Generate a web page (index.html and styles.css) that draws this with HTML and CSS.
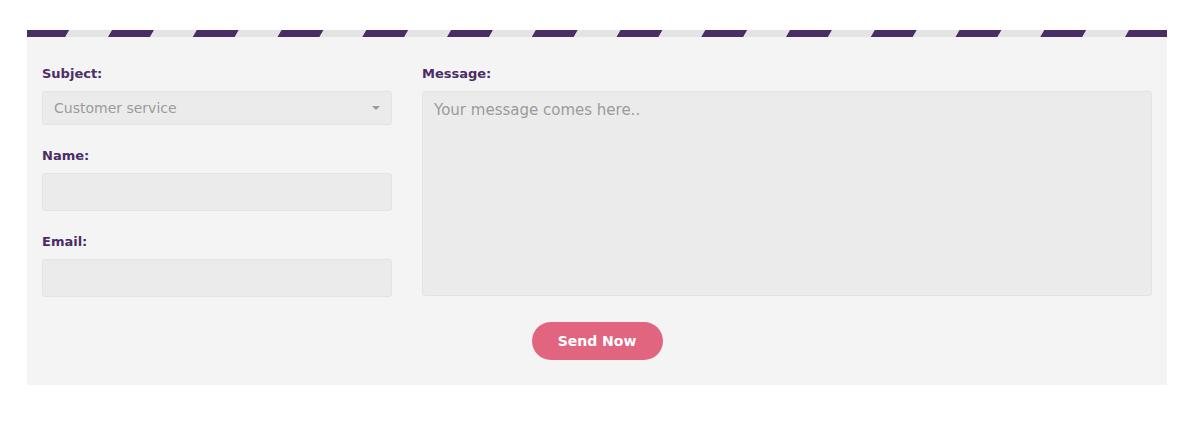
FILE: index.html
```html
<!DOCTYPE html>
<html>
<head>
<meta charset="utf-8">
<link rel="stylesheet" href="styles.css">
</head>
<body>
<div class="panel">
  <div class="stripes"></div>
  <form class="form">
    <div class="grid">
      <div class="col">
        <div class="group">
          <label class="label">Subject:</label>
          <div class="select">
            <span class="select-text">Customer service</span>
            <span class="caret"></span>
          </div>
        </div>
        <div class="group">
          <label class="label">Name:</label>
          <input class="input" type="text">
        </div>
        <div class="group last">
          <label class="label">Email:</label>
          <input class="input" type="text">
        </div>
      </div>
      <div class="col">
        <div class="group last">
          <label class="label">Message:</label>
          <textarea class="textarea" placeholder="Your message comes here.."></textarea>
        </div>
      </div>
    </div>
    <div class="actions">
      <button class="btn" type="button">Send Now</button>
    </div>
  </form>
</div>
</body>
</html>
```
FILE: styles.css
```css
* { box-sizing: border-box; }
body {
  margin: 0;
  background: #ffffff;
  font-family: "DejaVu Sans", sans-serif;
}
.panel {
  width: 1140px;
  margin: 30px 0 0 27px;
  background: #f4f4f4;
  padding-bottom: 25px;
}
.stripes {
  height: 7px;
  overflow: hidden;
  position: relative;
  background: #e4e4e4;
}
.stripes::before {
  content: "";
  position: absolute;
  left: -100px;
  right: -20px;
  top: 0;
  bottom: 0;
  transform-origin: bottom left;
  transform: skewX(-30deg);
  background-image: linear-gradient(90deg, #4b2d66 0 42px, #e4e4e4 42px 100%);
  background-size: 84.75px 100%;
  background-repeat: repeat-x;
  background-position: 96.25px 0;
}
.form { padding-top: 27px; }
.grid {
  display: grid;
  grid-template-columns: 380px 760px;
}
.col { padding: 0 15px; }
.group { margin-bottom: 21px; }
.group.last { margin-bottom: 0; }
.label {
  display: block;
  font-size: 13px;
  line-height: 20px;
  font-weight: 600;
  color: #4b2d66;
  margin-bottom: 7px;
}
.select {
  height: 34px;
  background: #ebebeb;
  border: 1px solid #e3e3e3;
  border-radius: 3px;
  display: flex;
  align-items: center;
  justify-content: space-between;
  padding: 0 11px 0 11px;
}
.select-text {
  font-size: 14px;
  color: #9b9b9b;
}
.caret {
  width: 0;
  height: 0;
  border-left: 4px solid transparent;
  border-right: 4px solid transparent;
  border-top: 4px solid #9a9a9a;
}
.input {
  display: block;
  width: 100%;
  height: 38px;
  background: #ebebeb;
  border: 1px solid #e3e3e3;
  border-radius: 3px;
  outline: none;
  margin: 0;
}
.textarea {
  display: block;
  width: 100%;
  height: 205px;
  margin: 0;
  background: #ebebeb;
  border: 1px solid #e3e3e3;
  border-radius: 3px;
  padding: 8px 11px;
  font-family: "DejaVu Sans", sans-serif;
  font-size: 15px;
  line-height: 20px;
  resize: none;
  outline: none;
}
.textarea::placeholder { color: #9b9b9b; }
.actions {
  display: flex;
  justify-content: center;
  padding-top: 25px;
}
.btn {
  width: 131px;
  height: 38px;
  border: none;
  border-radius: 19px;
  background: #e2657f;
  color: #ffffff;
  font-family: "DejaVu Sans", sans-serif;
  font-size: 14px;
  font-weight: 600;
  padding: 0;
}
```
